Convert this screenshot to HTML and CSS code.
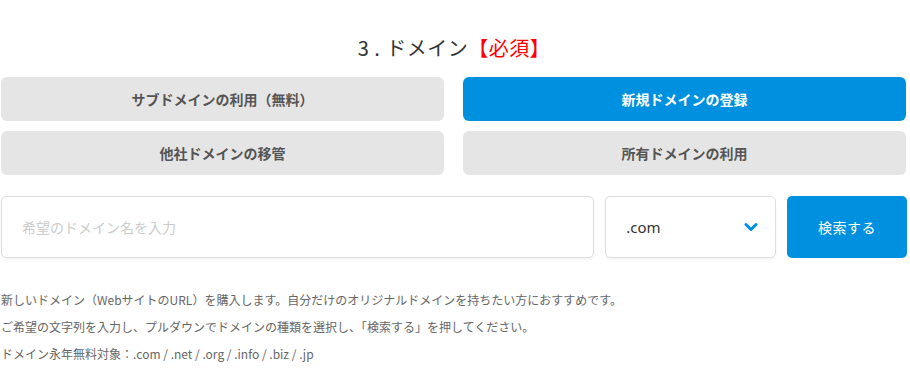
FILE: index.html
```html
<!DOCTYPE html>
<html lang="ja">
<head>
<meta charset="utf-8" />
<title>ドメイン</title>
<link rel="stylesheet" href="styles.css">
</head>
<body>

<section class="domain">
	<h2 class="domain-title">3<span class="dot">.</span>ドメイン<span class="required">【必須】</span></h2>

	<div class="choices">
		<button class="choice">サブドメインの利用（無料）</button>
		<button class="choice active">新規ドメインの登録</button>
		<button class="choice">他社ドメインの移管</button>
		<button class="choice">所有ドメインの利用</button>
	</div>

	<div class="search">
		<input class="search-input" type="text" placeholder="希望のドメイン名を入力">
		<div class="search-select">
			<span>.com</span>
			<svg width="14" height="10" viewBox="0 0 14 10"><path d="M2 2.5 L7 7.5 L12 2.5" fill="none" stroke="#0090e0" stroke-width="3" stroke-linecap="round" stroke-linejoin="round"/></svg>
		</div>
		<button class="search-button">検索する</button>
	</div>

	<div class="notes">
		<p>新しいドメイン（WebサイトのURL）を購入します。自分だけのオリジナルドメインを持ちたい方におすすめです。</p>
		<p>ご希望の文字列を入力し、プルダウンでドメインの種類を選択し、「検索する」を押してください。</p>
		<p>ドメイン永年無料対象：.com / .net / .org / .info / .biz / .jp</p>
	</div>
</section>

</body>
</html>
```

FILE: styles.css
```css
body {
	margin: 0;
	background: #fff;
	font-family: "Noto Sans CJK JP", "Noto Sans", sans-serif;
	color: #333;
}
.domain {
	width: 906px;
	margin-left: 1px;
	padding-top: 33px;
}
.domain-title {
	margin: 0 0 14px;
	text-align: center;
	font-size: 20px;
	font-weight: normal;
	line-height: 30px;
	letter-spacing: 0.5px;
	color: #333;
}
.domain-title .dot {
	padding: 0 6px 0 5px;
}
.required {
	color: #f00;
}

/* --------------------------------- */

.choices {
	display: grid;
	grid-template-columns: 443px 443px;
	column-gap: 19px;
	row-gap: 10px;
}
.choice {
	height: 44px;
	border: none;
	border-radius: 6px;
	background: #e5e5e5;
	color: #555;
	font: bold 14px "Noto Sans CJK JP", "Noto Sans", sans-serif;
}
.choice.active {
	background: #0090e0;
	color: #fff;
}

/* --------------------------------- */

.search {
	display: flex;
	gap: 11px;
	margin-top: 21px;
	height: 62px;
}
.search-input {
	box-sizing: border-box;
	width: 594px;
	height: 62px;
	border: 1px solid #ddd;
	border-radius: 5px;
	box-shadow: 0 2px 3px rgba(0,0,0,0.04);
	padding: 0 20px;
	font: 14px "Noto Sans CJK JP", "Noto Sans", sans-serif;
}
.search-input::placeholder {
	color: #ccc;
}
.search-select {
	box-sizing: border-box;
	width: 171px;
	border: 1px solid #ddd;
	border-radius: 5px;
	box-shadow: 0 2px 3px rgba(0,0,0,0.04);
	display: flex;
	align-items: center;
	justify-content: space-between;
	padding: 0 17px 0 20px;
	font: 15px "Noto Sans", sans-serif;
	color: #333;
}
.search-button {
	width: 120px;
	border: none;
	border-radius: 5px;
	background: #0090e0;
	color: #fff;
	font: 14px "Noto Sans CJK JP", "Noto Sans", sans-serif;
	letter-spacing: 0.5px;
}

/* --------------------------------- */

.notes {
	margin-top: 28px;
}
.notes p {
	margin: 0;
	font-size: 12px;
	line-height: 27px;
	color: #666;
}
```
